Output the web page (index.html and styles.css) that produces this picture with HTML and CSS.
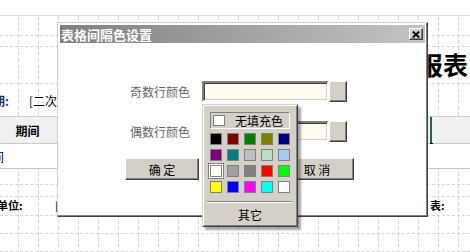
FILE: index.html
```html
<!DOCTYPE html>
<html lang="zh-CN">
<head>
  <meta charset="UTF-8">
  <title>表格间隔色设置</title>
  <link rel="stylesheet" href="styles.css">
</head>
<body>
  <div class="sheet">
    <div class="sheet-top"></div>
    <div class="grid">
      <div class="row r20"></div>
      <div class="row r11"></div>
      <div class="row title-row"><span class="report-title">月度报表</span></div>
      <div class="row info-row">
        <span class="info-label">期:</span>
        <span class="info-value">[二次开发报表]</span>
      </div>
      <div class="row head-row">
        <div class="head-cell">期间</div>
        <div class="head-fill"></div>
        <div class="head-cell head-sel"></div>
      </div>
      <div class="row data-row"><span class="cut-text">间</span></div>
      <div class="row r16"></div>
      <div class="row r12"></div>
      <div class="row foot-row">
        <span class="foot-left">单位:</span>
        <span class="foot-mid">[</span>
        <span class="foot-right">表:</span>
      </div>
      <div class="row r18"></div>
      <div class="row r18"></div>
    </div>
  </div>

  <div class="dialog">
    <div class="titlebar">
      <span class="title-text">表格间隔色设置</span>
      <button class="close-btn" type="button">
        <svg width="8" height="7" viewBox="0 0 8 7"><path d="M0.8 0.6 L7.2 6.4 M7.2 0.6 L0.8 6.4" stroke="#000" stroke-width="1.9" fill="none"/></svg>
      </button>
    </div>
    <div class="dialog-body">
      <div class="field-row">
        <label class="field-label">奇数行颜色</label>
        <div class="combo">
          <div class="combo-field"></div>
          <div class="combo-btn"></div>

          <div class="color-popup">
            <div class="no-fill"><span class="no-fill-box"></span><span>无填充色</span></div>
            <div class="swatches">
              <span class="swatch" style="background:#000000"></span>
              <span class="swatch" style="background:#800000"></span>
              <span class="swatch" style="background:#008000"></span>
              <span class="swatch" style="background:#808000"></span>
              <span class="swatch" style="background:#000080"></span>
              <span class="swatch" style="background:#800080"></span>
              <span class="swatch" style="background:#008080"></span>
              <span class="swatch" style="background:#c0c0c0"></span>
              <span class="swatch" style="background:#c0dcc0"></span>
              <span class="swatch" style="background:#a6caf0"></span>
              <span class="swatch selected" style="background:#fffbf0"></span>
              <span class="swatch" style="background:#a0a0a4"></span>
              <span class="swatch" style="background:#808080"></span>
              <span class="swatch" style="background:#ff0000"></span>
              <span class="swatch" style="background:#00ff00"></span>
              <span class="swatch" style="background:#ffff00"></span>
              <span class="swatch" style="background:#0000ff"></span>
              <span class="swatch" style="background:#ff00ff"></span>
              <span class="swatch" style="background:#00ffff"></span>
              <span class="swatch" style="background:#ffffff"></span>
            </div>
            <div class="separator"></div>
            <div class="other">其它</div>
          </div>
        </div>
      </div>
      <div class="field-row second">
        <label class="field-label">偶数行颜色</label>
        <div class="combo">
          <div class="combo-field"></div>
          <div class="combo-btn"></div>
        </div>
      </div>
      <div class="actions">
        <button class="win-btn" type="button">确 定</button>
        <button class="win-btn" type="button">取 消</button>
      </div>
    </div>
  </div>
</body>
</html>
```

FILE: styles.css
```css
:root {
  --face: #d4d0c8;
  --shadow: #808080;
  --dark: #404040;
  --grid-line: #d6d6d6;
  --cream: #fffbf0;
}
* { box-sizing: border-box; }
body {
  margin: 0;
  width: 470px;
  height: 252px;
  overflow: hidden;
  position: relative;
  background: #fff;
  font-family: "Noto Sans CJK SC", "Noto Sans", sans-serif;
  font-size: 12px;
  color: #000;
}

/* report sheet behind the dialog */
.sheet-top { height: 16px; border-bottom: 1px solid #dcdcdc; }
.grid { position: relative; }
.grid::before {
  content: "";
  position: absolute;
  inset: 0;
  background-image: linear-gradient(to right, var(--grid-line) 1px, transparent 1px);
  background-size: 20px 100%;
  background-position: 18px 0;
  -webkit-mask-image: repeating-linear-gradient(to bottom, #000 0 4px, transparent 4px 6px);
  mask-image: repeating-linear-gradient(to bottom, #000 0 4px, transparent 4px 6px);
}
.row {
  position: relative;
  z-index: 1;
  display: flex;
  align-items: center;
  border-bottom: 1px dashed var(--grid-line);
  white-space: nowrap;
}
.r20 { height: 20px; }
.r11 { height: 11px; }
.r16 { height: 16px; }
.r12 { height: 12px; }
.r18 { height: 18px; }
.title-row { height: 37px; justify-content: flex-end; padding: 0 2px 2px 0; }
.report-title { font-size: 25px; font-weight: bold; line-height: 1; }
.info-row { height: 32px; border-bottom: none; }
.info-label { width: 29px; margin-left: -7px; font-weight: bold; color: #1c2f5a; }
.info-value { margin-left: 7px; }
.head-row {
  height: 28px;
  background: #f0f0f0;
  border-top: 1px solid #d0d0d0;
  border-bottom: 1px solid #c8c8c8;
  align-items: stretch;
}
.head-cell { width: 55px; display: flex; align-items: center; justify-content: center; font-weight: bold; }
.head-fill { flex: 1; }
.head-sel { width: 40px; border-left: 2px solid #1f6b3c; position: relative; }
.head-sel::after {
  content: "";
  position: absolute;
  left: -2px;
  bottom: -4px;
  width: 3px;
  height: 4px;
  background: #000;
}
.data-row { height: 25px; background: #fff; border-bottom: 1px solid #c8c8c8; }
.cut-text { margin-left: -8px; }
.foot-row { height: 19px; font-size: 11px; font-weight: bold; padding-bottom: 3px; }
.foot-left { width: 58px; margin-left: -3px; }
.foot-mid { flex: 1; font-weight: normal; }
.foot-right { width: 40px; }

/* dialog */
.dialog {
  position: absolute;
  left: 57px;
  top: 22px;
  width: 371px;
  z-index: 10;
  padding: 1px;
  background: #fff;
  border: 1px solid;
  border-color: var(--face) var(--dark) var(--dark) var(--face);
  box-shadow: inset -1px -1px 0 var(--shadow);
}
.titlebar {
  margin: 1px 1px 0;
  height: 18px;
  display: flex;
  align-items: center;
  justify-content: space-between;
  padding: 0 2px 0 1px;
  background: linear-gradient(to right, #808080, #c4c4c4);
}
.title-text { color: #fff; font-weight: bold; font-size: 13px; line-height: 1; }
.close-btn {
  width: 14px;
  height: 12px;
  padding: 0;
  display: flex;
  align-items: center;
  justify-content: center;
  background: var(--face);
  border: 1px solid;
  border-color: #fff var(--dark) var(--dark) #fff;
  box-shadow: inset -1px -1px 0 var(--shadow);
}
.dialog-body { padding: 38px 0 35px; }
.field-row {
  display: grid;
  grid-template-columns: 131px 145px;
  column-gap: 12px;
  align-items: center;
}
.field-row.second { margin-top: 19px; }
.field-label { text-align: right; color: #666; font-size: 12px; }
.combo { position: relative; display: flex; height: 21px; }
.combo-field {
  flex: 1;
  background: var(--cream);
  border: 2px solid;
  border-color: var(--shadow) #fff #fff var(--shadow);
  box-shadow: inset 1px 1px 0 var(--dark), inset -1px -1px 0 var(--face);
}
.combo-btn {
  width: 18px;
  background: var(--face);
  border: 1px solid;
  border-color: #fff var(--dark) var(--dark) #fff;
  box-shadow: inset -1px -1px 0 var(--shadow);
}
.actions { display: flex; gap: 81px; padding-left: 66px; margin-top: 16px; }
.win-btn {
  width: 74px;
  height: 22px;
  padding: 0;
  font-family: inherit;
  font-size: 12px;
  color: #000;
  background: var(--face);
  border: 1px solid;
  border-color: #fff var(--dark) var(--dark) #fff;
  box-shadow: inset -1px -1px 0 var(--shadow);
}

/* color drop-down */
.color-popup {
  position: absolute;
  left: 0;
  top: calc(100% + 2px);
  width: 96px;
  z-index: 20;
  padding: 7px 7px 3px;
  background: var(--face);
  border: 1px solid;
  border-color: var(--face) var(--dark) var(--dark) var(--face);
  box-shadow: inset 1px 1px 0 #fff, inset -1px -1px 0 var(--shadow), 3px 3px 2px rgba(0,0,0,0.35);
}
.no-fill {
  height: 17px;
  display: flex;
  align-items: center;
  gap: 10px;
  padding-left: 2px;
  border: 1px solid;
  border-color: var(--shadow) #fff #fff var(--shadow);
  line-height: 1;
}
.no-fill-box { width: 12px; height: 11px; background: #fff; border: 1px solid var(--shadow); }
.swatches {
  margin-top: 4px;
  display: grid;
  grid-template-columns: repeat(5, 12px);
  grid-auto-rows: 12px;
  column-gap: 5px;
  row-gap: 4px;
}
.swatch { border: 1px solid var(--shadow); }
.swatch.selected { box-shadow: 0 0 0 1px #fff, 0 0 0 2px var(--shadow); }
.separator {
  margin: 8px -2px 0 -3px;
  border-top: 1px solid var(--shadow);
  border-bottom: 1px solid #fff;
}
.other { margin-top: 4px; height: 16px; line-height: 16px; text-align: center; }
```
